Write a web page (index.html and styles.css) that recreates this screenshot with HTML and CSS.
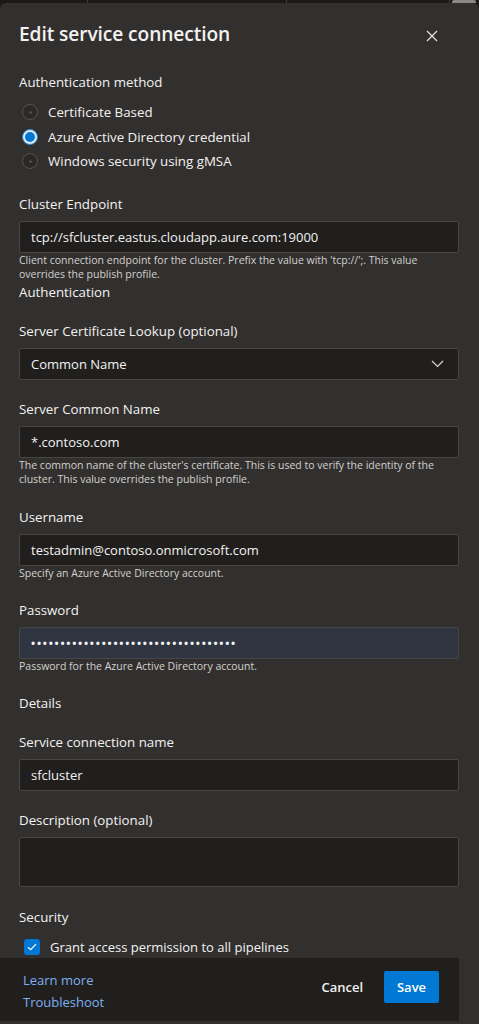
FILE: index.html
```html
<!DOCTYPE html>
<html>
<head>
<meta charset="utf-8">
<link rel="stylesheet" href="styles.css">
</head>
<body>
<div class="topbar"><span class="seg s1"></span><span class="seg s2"></span><span class="seg s3"></span><span class="thumb"></span></div>
<div class="panel">
  <div class="scroll">
    <div class="header">
      <h1 class="title">Edit service connection</h1>
      <button class="close" aria-label="Close">
        <svg width="12" height="12" viewBox="0 0 12 12"><path d="M1 1L11 11M11 1L1 11" stroke="#e8e6e4" stroke-width="1.2" fill="none"/></svg>
      </button>
    </div>

    <div class="label section-first">Authentication method</div>
    <div class="radios">
      <div class="radio-row"><span class="radio"><span class="dot"></span></span><span>Certificate Based</span></div>
      <div class="radio-row"><span class="radio checked"><span class="dot"></span></span><span>Azure Active Directory credential</span></div>
      <div class="radio-row"><span class="radio"><span class="dot"></span></span><span>Windows security using gMSA</span></div>
    </div>

    <div class="field g20">
      <div class="label">Cluster Endpoint</div>
      <div class="input">tcp://sfcluster.eastus.cloudapp.aure.com:19000</div>
      <div class="help">Client connection endpoint for the cluster. Prefix the value with 'tcp://';. This value overrides the publish profile.</div>
    </div>
    <div class="label">Authentication</div>

    <div class="field g19">
      <div class="label">Server Certificate Lookup (optional)</div>
      <div class="input select"><span>Common Name</span>
        <svg width="13" height="8" viewBox="0 0 13 8"><path d="M1 1L6.5 6.5L12 1" stroke="#d8d6d4" stroke-width="1.2" fill="none"/></svg>
      </div>
    </div>

    <div class="field g19">
      <div class="label">Server Common Name</div>
      <div class="input">*.contoso.com</div>
      <div class="help">The common name of the cluster's certificate. This is used to verify the identity of the cluster. This value overrides the publish profile.</div>
    </div>

    <div class="field g20">
      <div class="label">Username</div>
      <div class="input">testadmin@contoso.onmicrosoft.com</div>
      <div class="help">Specify an Azure Active Directory account.</div>
    </div>

    <div class="field g20">
      <div class="label">Password</div>
      <div class="input password">&#8226;&#8226;&#8226;&#8226;&#8226;&#8226;&#8226;&#8226;&#8226;&#8226;&#8226;&#8226;&#8226;&#8226;&#8226;&#8226;&#8226;&#8226;&#8226;&#8226;&#8226;&#8226;&#8226;&#8226;&#8226;&#8226;&#8226;&#8226;&#8226;&#8226;&#8226;&#8226;&#8226;&#8226;&#8226;</div>
      <div class="help">Password for the Azure Active Directory account.</div>
    </div>

    <div class="label g19">Details</div>

    <div class="field g19">
      <div class="label">Service connection name</div>
      <div class="input">sfcluster</div>
    </div>

    <div class="field g19">
      <div class="label">Description (optional)</div>
      <div class="input textarea"></div>
    </div>

    <div class="label g20">Security</div>
    <div class="check-row">
      <span class="checkbox"><svg width="10" height="8" viewBox="0 0 10 8"><path d="M1 4.2L3.6 6.6L9 1.2" stroke="#fff" stroke-width="1.2" fill="none"/></svg></span>
      <span>Grant access permission to all pipelines</span>
    </div>
  </div>

  <div class="footer">
    <div class="links">
      <a class="link">Learn more</a>
      <a class="link">Troubleshoot</a>
    </div>
    <div class="actions">
      <button class="btn cancel">Cancel</button>
      <button class="btn save">Save</button>
    </div>
  </div>
</div>
</body>
</html>
```

FILE: styles.css
```css
* { box-sizing: border-box; }
html, body { margin: 0; padding: 0; }
body {
  width: 479px;
  height: 1024px;
  overflow: hidden;
  background: #1b1a19;
  font-family: "Open Sans", "Noto Sans", sans-serif;
  color: #f3f2f1;
}
.topbar {
  height: 3px;
  position: relative;
  background: #1b1a19;
}
.topbar .seg { position: absolute; top: 0; height: 3px; width: 1px; background: #3b3a39; }
.topbar .s1 { left: 87px; }
.topbar .s2 { left: 286px; }
.topbar .s3 { left: 449px; }
.topbar .thumb { position: absolute; top: 0; left: 452px; width: 24px; height: 3px; background: #8a8886; border-radius: 2px 2px 0 0; }

.panel {
  height: 1021px;
  background: #32302f;
  border-radius: 6px 6px 0 0;
  display: flex;
  flex-direction: column;
  overflow: hidden;
}
.scroll {
  flex: 1;
  overflow: hidden;
  padding: 0 20px 0 19px;
}
.header {
  display: flex;
  justify-content: space-between;
  align-items: center;
  padding-top: 17px;
  height: 45px;
}
.title {
  margin: 0;
  font-size: 19.2px;
  font-weight: 600;
  line-height: 28px;
  letter-spacing: -0.1px;
}
.close {
  background: none;
  border: 0;
  padding: 0;
  margin-right: 21px;
  margin-top: 3px;
  width: 12px;
  height: 12px;
  display: flex;
}
.label {
  font-size: 13.3px;
  line-height: 20px;
  color: #f3f2f1;
}
.section-first { margin-top: 24px; }
.radios { margin-top: 8px; display: flex; flex-direction: column; }
.radio-row {
  height: 24.5px;
  display: flex;
  align-items: center;
  font-size: 13.3px;
  color: #f3f2f1;
}
.radio {
  width: 16px;
  height: 16px;
  border-radius: 50%;
  border: 1px solid #55524f;
  background: #2b2928;
  margin-left: 3px;
  margin-right: 10px;
  display: flex;
  align-items: center;
  justify-content: center;
}
.radio .dot { width: 3px; height: 3px; border-radius: 50%; background: #4e4b49; }
.radio.checked { border: 1.5px solid #1a86d9; background: #e6e6e6; }
.radio.checked .dot { width: 10px; height: 10px; background: #0078d4; }

.field { display: flex; flex-direction: column; }
.field .label { margin-bottom: 7px; }
.g19 { margin-top: 19px; }
.g20 { margin-top: 20px; }
.g21 { margin-top: 21px; }
.input {
  height: 32px;
  background: #201f1e;
  border: 1px solid #484644;
  border-radius: 2px;
  padding: 0 11px;
  display: flex;
  align-items: center;
  font-size: 13px;
  color: #f3f2f1;
}
.select { justify-content: space-between; padding-right: 14px; }
.password { background: #2f3541; letter-spacing: 1.75px; font-size: 11px; font-weight: 700; padding-bottom: 1px; }
.textarea { height: 50px; }
.help {
  font-size: 10.5px;
  line-height: 14.5px;
  color: #d2d0ce;
}
.check-row {
  height: 20px;
  margin-top: 10px;
  display: flex;
  align-items: center;
  font-size: 13px;
}
.checkbox {
  width: 16px;
  height: 16px;
  border-radius: 3px;
  background: #0078d4;
  margin-left: 5px;
  margin-right: 10px;
  display: flex;
  align-items: center;
  justify-content: center;
}
.footer {
  height: 63px;
  width: 459px;
  margin-bottom: 3px;
  background: #201f1e;
  display: flex;
  justify-content: space-between;
  align-items: flex-start;
  padding: 12px 20px 0 23px;
}
.links { display: flex; flex-direction: column; gap: 2px; }
.link {
  font-size: 13px;
  line-height: 20px;
  color: #7fb0ee;
}
.actions { display: flex; align-items: center; gap: 8px; margin-top: 1px; }
.btn {
  font-family: "Open Sans", "Noto Sans", sans-serif;
  font-size: 13px;
  font-weight: 600;
  height: 32px;
  border: 0;
  border-radius: 2px;
  padding: 0 13px;
  color: #f3f2f1;
  background: transparent;
}
.save { background: #0078d4; color: #fff; width: 55px; padding: 0; }
```
